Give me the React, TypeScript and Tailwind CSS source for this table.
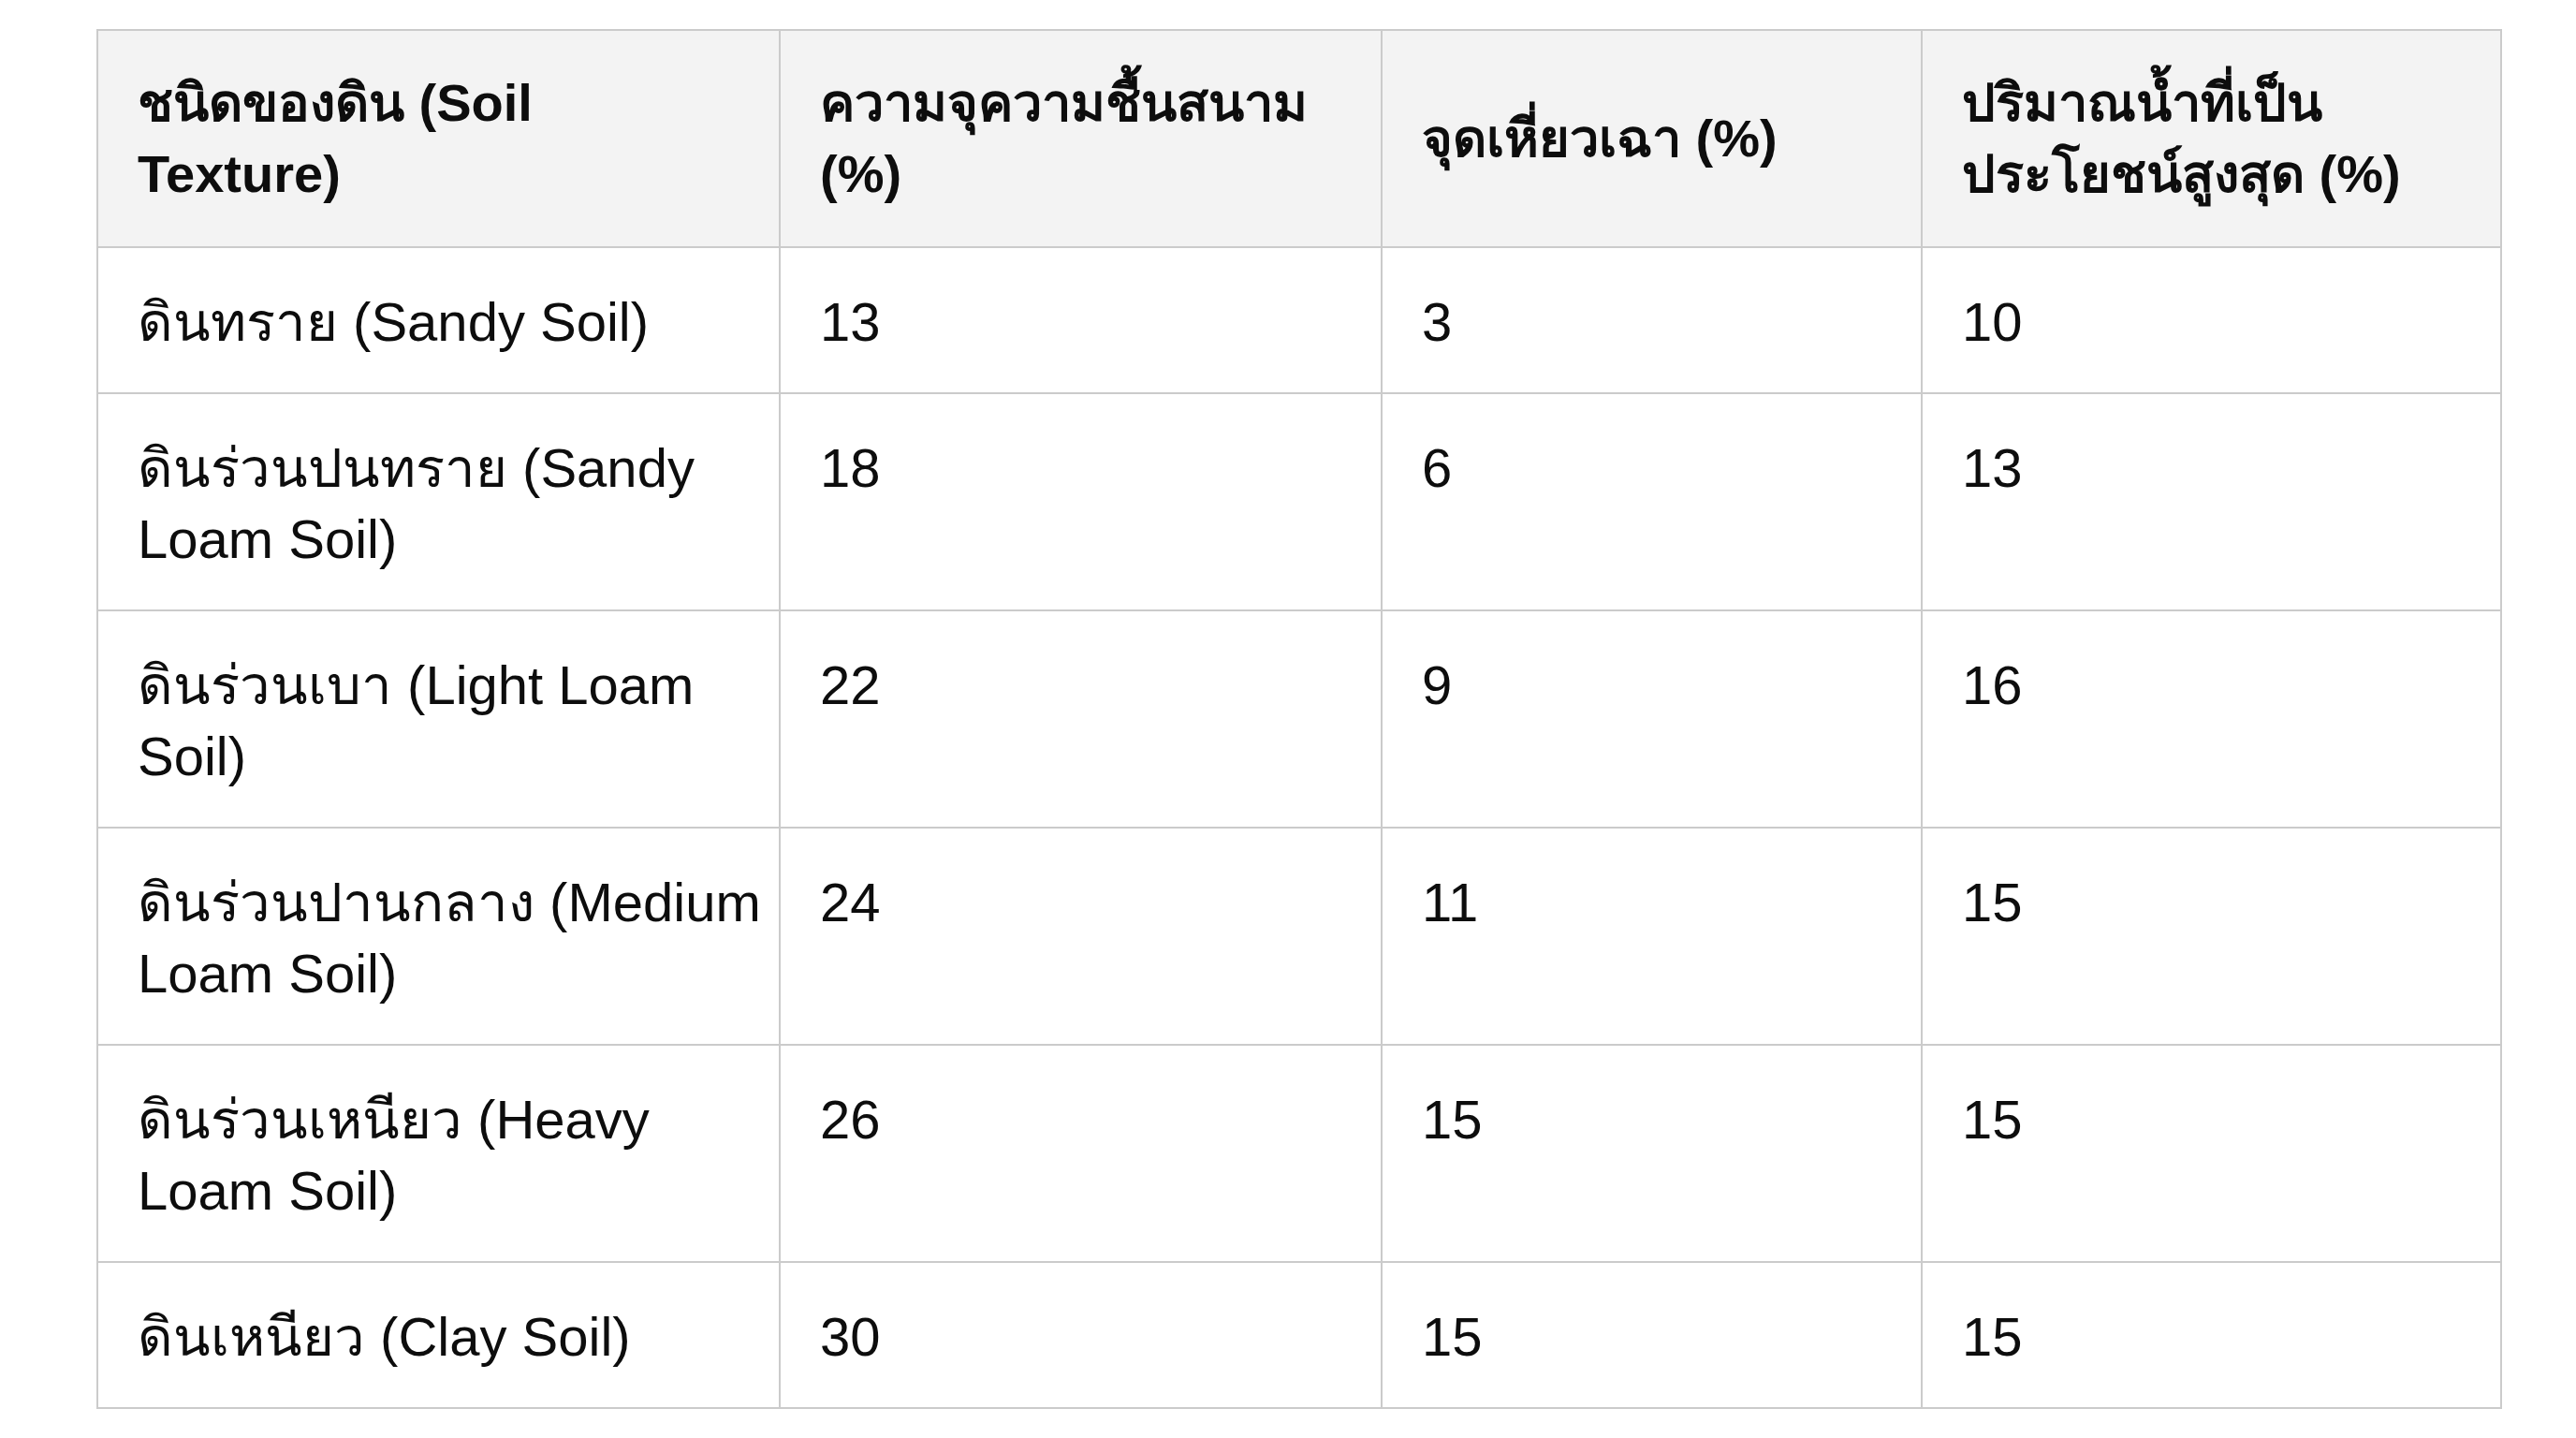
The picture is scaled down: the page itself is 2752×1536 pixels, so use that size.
import React from "react";

const headers = [
  "ชนิดของดิน (Soil Texture)",
  "ความจุความชื้นสนาม (%)",
  "จุดเหี่ยวเฉา (%)",
  "ปริมาณน้ำที่เป็นประโยชน์สูงสุด (%)",
];

const rows: [string, string, string, string][] = [
  ["ดินทราย (Sandy Soil)", "13", "3", "10"],
  ["ดินร่วนปนทราย (Sandy Loam Soil)", "18", "6", "13"],
  ["ดินร่วนเบา (Light Loam Soil)", "22", "9", "16"],
  ["ดินร่วนปานกลาง (Medium Loam Soil)", "24", "11", "15"],
  ["ดินร่วนเหนียว (Heavy Loam Soil)", "26", "15", "15"],
  ["ดินเหนียว (Clay Soil)", "30", "15", "15"],
];

export default function App() {
  return (
    <div
      className="min-h-screen w-full bg-white pt-[31px] pl-[103px] text-[#0d0d0d]"
      style={{ fontFamily: '"Liberation Sans", Arial, "Noto Sans", sans-serif' }}
    >
      <table className="table-fixed border-collapse border-2 border-[#cbcbcb] w-[2568px] leading-[76px]">
        <colgroup>
          <col className="w-[729px]" />
          <col className="w-[643px]" />
          <col className="w-[577px]" />
          <col className="w-[619px]" />
        </colgroup>
        <thead>
          <tr className="bg-[#f3f3f3]">
            {headers.map((h) => (
              <th
                key={h}
                className="border-2 border-[#cbcbcb] px-[42px] py-[39px] text-left align-middle text-[56px] font-bold"
              >
                {h}
              </th>
            ))}
          </tr>
        </thead>
        <tbody>
          {rows.map((r) => (
            <tr key={r[0]} className="bg-white">
              {r.map((c, i) => (
                <td
                  key={i}
                  className="border-2 border-[#cbcbcb] pl-[42px] pr-[12px] pt-[41px] pb-[37px] text-left align-top text-[58px] font-normal"
                >
                  {c}
                </td>
              ))}
            </tr>
          ))}
        </tbody>
      </table>
    </div>
  );
}
